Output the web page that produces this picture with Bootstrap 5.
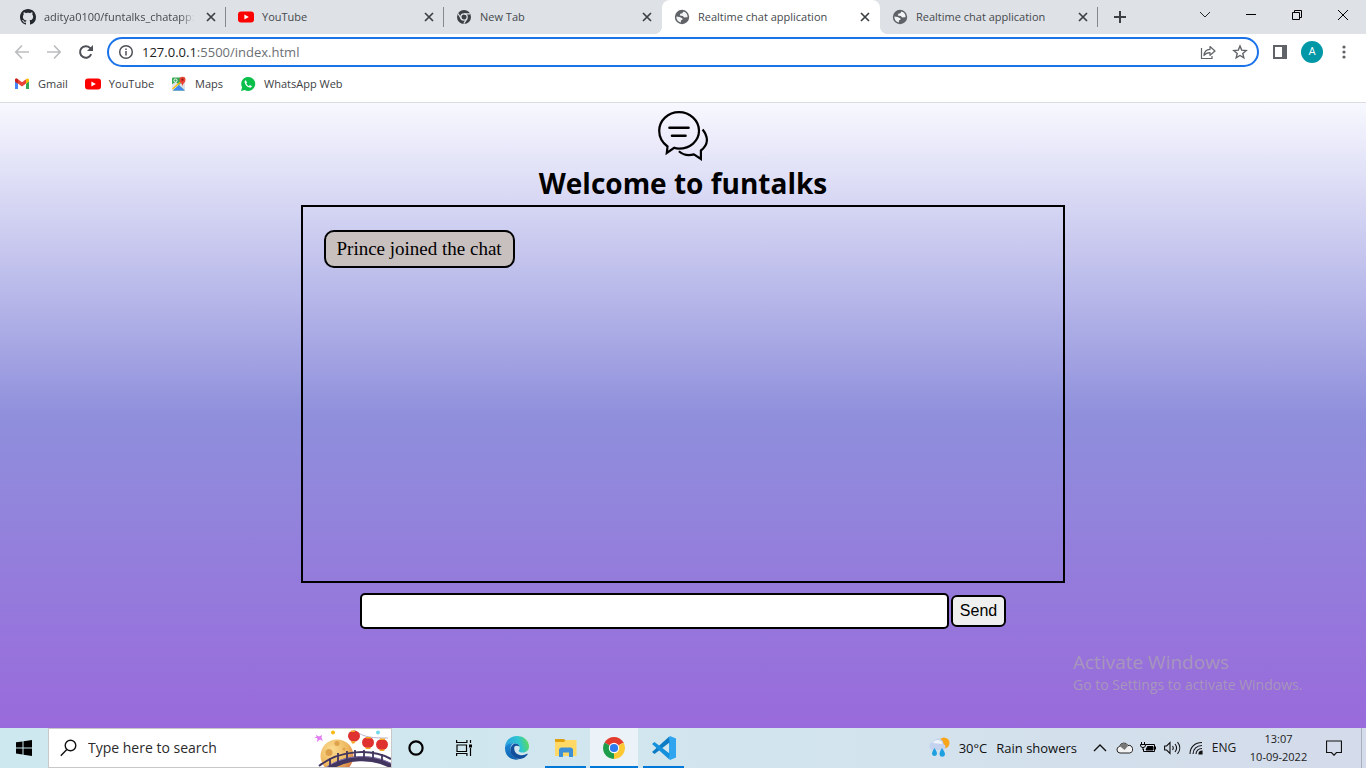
<!DOCTYPE html>
<html lang="en">
<head>
<meta charset="utf-8">
<meta name="viewport" content="width=device-width, initial-scale=1">
<title>Realtime chat application</title>
<link href="https://cdn.jsdelivr.net/npm/bootstrap@5.3.0/dist/css/bootstrap.min.css" rel="stylesheet">
<style>
  body { font-family: "Open Sans", "Noto Sans", sans-serif; font-size: 11px; line-height: 16px; color: #3c4043; }
  button { border: 0; background: none; padding: 0; color: inherit; }
  svg { display: block; flex: none; }

  /* browser tabs */
  .tab-strip { background: #dee1e6; height: 34px; padding-left: 8px; }
  .tab-item { width: 218px; padding: 0 7px 0 12px; position: relative; }
  .tab-item.ruled { background: linear-gradient(#868a8f, #868a8f) right center / 1px 20px no-repeat; }
  .tab-item.current { background: #fff; border-radius: 8px 8px 0 0; }
  .tab-item.current::before, .tab-item.current::after { content: ""; position: absolute; bottom: 0; width: 8px; height: 8px; }
  .tab-item.current::before { left: -8px; background: radial-gradient(circle at 0 0, transparent 8px, #fff 8px); }
  .tab-item.current::after { right: -8px; background: radial-gradient(circle at 100% 0, transparent 8px, #fff 8px); }
  .tab-label { color: #45494d; text-decoration: none; }
  .tab-label span { white-space: nowrap; }
  .tab-label .faded { -webkit-mask-image: linear-gradient(90deg, #000 90%, transparent); mask-image: linear-gradient(90deg, #000 90%, transparent); }
  .tab-close { width: 16px; height: 16px; }
  .new-tab { width: 44px; }
  .win-btn { width: 46px; height: 30px; color: #000; }

  /* toolbar */
  .toolbar { height: 36px; padding: 0 6px; gap: 5px; color: #5f6368; }
  .tool-btn { width: 32px; height: 28px; }
  .omnibox { border: 2px solid #1a73e8; border-radius: 15px; height: 30px; padding-left: 9px; padding-right: 1px; }
  .address { font-size: 13px; line-height: 20px; color: #6b6f74; }
  .address b { font-weight: 400; color: #202124; }
  .avatar { width: 22px; height: 22px; background: #0097a7; color: #fff; font: 11px/22px Roboto, sans-serif; text-align: center; }
  .bookmarks { height: 33px; padding: 0 14px 4px; gap: 17px; border-bottom: 1px solid #dadce0; }
  .bookmarks a { color: #3c4043; text-decoration: none; gap: 8px; }

  /* page */
  .chat-page { background: linear-gradient(#f8f8ff, #8f8fdc 50%, #996adb); padding-top: 8px; padding-bottom: 99px; position: relative; }
  .chat-page h1 { font-size: 28px; line-height: 44px; font-weight: 700; color: #000; margin: 0; }
  .chat-box { width: 56%; border: 2px solid #000; padding: 23px 21px; margin-bottom: 10px; }
  .bubble { background: #c8bfbf; color: #000; border: 2px solid #000; border-radius: 10px; padding: 5px 11px; font: 19px/24px "Liberation Serif", serif; }
  .send-form { width: 646px; max-width: 100%; gap: 2px; }
  .send-form input { border: 2px solid #000; border-radius: 5px; height: 36px; min-width: 0; padding: 0 8px; background: #fff; }
  .send-form button { width: 55px; height: 32px; border: 2px solid #000; border-radius: 6px; background: #efefef; color: #000; font: 16px/20px "Liberation Sans", sans-serif; }
  .watermark { position: absolute; right: 57px; bottom: 33px; width: 236px; color: #a796bc; font-size: 14px; line-height: 20px; white-space: nowrap; }
  .watermark p { font-size: 19px; line-height: 26px; margin: 0; }

  /* taskbar */
  .taskbar { height: 40px; background: linear-gradient(90deg, #cde8ee, #d2e5ee 55%, #d4dbea); color: #1b1b1b; }
  .task-btn { width: 48px; height: 40px; }
  .app-btn { width: 49px; height: 40px; padding: 0 4px; }
  .app-btn > span { height: 40px; border-bottom: 2px solid #0078d7; padding-top: 2px; }
  .app-btn.current { padding: 0 1px 0 0; }
  .app-btn.current > span { background: #ebf3f8; }
  .search-box { width: 344px; height: 40px; background: #fff; border: 1px solid #c8c8c8; padding-left: 11px; gap: 11px; }
  .search-box input { border: 0; outline: 0; background: transparent; min-width: 0; width: 100px; font-size: 14px; line-height: 20px; padding: 0; color: #2b2b2b; }
  .search-box input::placeholder { color: #2b2b2b; opacity: 1; }
  .weather { font-size: 13px; gap: 9px; color: #111; margin-right: 11px; }
  .tray-btn { width: 24px; height: 40px; }
  .lang { width: 37px; padding-right: 5px; font-size: 12px; }
  .clock { width: 67px; line-height: 18px; font-size: 11px; }
  .notice { width: 43px; margin-right: 6px; }
  .peek { width: 5px; border-left: 1px solid #a9b0bb; }
</style>
</head>
<body class="vh-100 d-flex flex-column overflow-hidden">

<svg width="0" height="0" class="position-absolute" aria-hidden="true">
  <symbol id="i-x" viewBox="0 0 16 16"><path d="M4 4l8 8M12 4l-8 8" stroke="#3c4043" stroke-width="1.7" fill="none"/></symbol>
  <symbol id="i-yt" viewBox="0 0 16 16"><rect y="2.500" width="16" height="11" rx="3" fill="#f00"/><path d="M6.400 5.500v5L10.800 8z" fill="#fff"/></symbol>
  <symbol id="i-globe" viewBox="0 0 16 16"><circle cx="8" cy="8" r="7.200" fill="#5f6368"/><path d="M9.500 2.500L8.300 4.200 6.300 4.800 5.800 6.600 8.800 6.900 10.200 8.500 12.200 8.200 13.600 8.300C13.800 5.200 12 3 9.500 2.500zM2.300 7.600L5.600 7.900 8.300 9.200 8.600 10.600 6.900 11.600 6.900 13.600C4 13 2.200 10.600 2.300 7.600z" fill="#f1f3f4"/></symbol>
</svg>

<header class="bg-white">
  <nav class="tab-strip d-flex" aria-label="Tabs">
    <div class="tab-item ruled d-flex align-items-center">
      <a href="#" class="tab-label d-flex align-items-center flex-grow-1 gap-2"><svg width="16" height="16" viewBox="0 0 16 16" fill="#24292f"><path d="M8 0C3.580 0 0 3.580 0 8c0 3.540 2.290 6.530 5.470 7.590.4.070.55-.17.55-.38 0-.19-.01-.82-.01-1.490-2.010.37-2.530-.49-2.690-.94-.09-.23-.48-.94-.82-1.130-.28-.15-.68-.52-.01-.53.63-.01 1.080.58 1.230.82.72 1.210 1.870.87 2.330.66.07-.52.28-.87.51-1.070-1.780-.2-3.640-.89-3.640-3.950 0-.87.31-1.590.82-2.150-.08-.2-.36-1.020.08-2.120 0 0 .67-.21 2.200.82.64-.18 1.320-.27 2-.27s1.360.09 2 .27c1.530-1.040 2.200-.82 2.200-.82.44 1.100.16 1.920.08 2.120.51.56.82 1.270.82 2.150 0 3.070-1.870 3.750-3.650 3.950.29.25.54.73.54 1.480 0 1.070-.01 1.930-.01 2.200 0 .21.15.46.55.38A8.010 8.010 0 0 0 16 8c0-4.420-3.580-8-8-8"/></svg><span class="faded">aditya0100/funtalks_chatapp:</span></a>
      <button class="tab-close" aria-label="Close tab"><svg width="16" height="16"><use href="#i-x"/></svg></button>
    </div>
    <div class="tab-item ruled d-flex align-items-center">
      <a href="#" class="tab-label d-flex align-items-center flex-grow-1 gap-2"><svg width="16" height="16"><use href="#i-yt"/></svg><span>YouTube</span></a>
      <button class="tab-close" aria-label="Close tab"><svg width="16" height="16"><use href="#i-x"/></svg></button>
    </div>
    <div class="tab-item d-flex align-items-center">
      <a href="#" class="tab-label d-flex align-items-center flex-grow-1 gap-2"><svg width="16" height="16" viewBox="0 0 16 16"><circle cx="8" cy="8" r="7" fill="#3c4043"/><circle cx="8" cy="8" r="3.200" fill="none" stroke="#dee1e6" stroke-width="1.300"/><path d="M8 4.800h6M10.800 9.600l-3 5M5.200 9.600L2 4.500" stroke="#dee1e6" stroke-width="1.200"/></svg><span>New Tab</span></a>
      <button class="tab-close" aria-label="Close tab"><svg width="16" height="16"><use href="#i-x"/></svg></button>
    </div>
    <div class="tab-item current d-flex align-items-center">
      <a href="#" class="tab-label d-flex align-items-center flex-grow-1 gap-2"><svg width="16" height="16"><use href="#i-globe"/></svg><span>Realtime chat application</span></a>
      <button class="tab-close" aria-label="Close tab"><svg width="16" height="16"><use href="#i-x"/></svg></button>
    </div>
    <div class="tab-item ruled d-flex align-items-center">
      <a href="#" class="tab-label d-flex align-items-center flex-grow-1 gap-2"><svg width="16" height="16"><use href="#i-globe"/></svg><span>Realtime chat application</span></a>
      <button class="tab-close" aria-label="Close tab"><svg width="16" height="16"><use href="#i-x"/></svg></button>
    </div>
    <button class="new-tab d-flex align-items-center justify-content-center" aria-label="New tab"><svg width="14" height="14" viewBox="0 0 14 14"><path d="M7 1v12M1 7h12" stroke="#3c4043" stroke-width="2"/></svg></button>
    <div class="d-flex ms-auto">
      <button class="win-btn d-flex align-items-center justify-content-center" aria-label="Search tabs"><svg width="12" height="12" viewBox="0 0 12 12" fill="none" stroke="#222"><path d="M1 3l5 5 5-5"/></svg></button>
      <button class="win-btn d-flex align-items-center justify-content-center" aria-label="Minimize"><svg width="10" height="10" viewBox="0 0 10 10"><path d="M0 4.500h10" stroke="#000"/></svg></button>
      <button class="win-btn d-flex align-items-center justify-content-center" aria-label="Restore"><svg width="10" height="10" viewBox="0 0 10 10" fill="none" stroke="#000"><path d="M.5 2.500h7v7h-7zM2.500 2.500v-2h7v7h-2"/></svg></button>
      <button class="win-btn d-flex align-items-center justify-content-center" aria-label="Close"><svg width="10" height="10" viewBox="0 0 10 10" stroke="#000"><path d="M0 0l10 10M10 0L0 10"/></svg></button>
    </div>
  </nav>

  <div class="toolbar d-flex align-items-center">
    <div class="d-flex">
      <button class="tool-btn d-flex align-items-center justify-content-center" aria-label="Back"><svg width="16" height="16" viewBox="0 0 16 16" fill="none" stroke="#bbbdc0" stroke-width="1.700"><path d="M15 8H2M8 1.500L1.800 8 8 14.500"/></svg></button>
      <button class="tool-btn d-flex align-items-center justify-content-center" aria-label="Forward"><svg width="16" height="16" viewBox="0 0 16 16" fill="none" stroke="#bbbdc0" stroke-width="1.700"><path d="M1 8h13M8 1.500L14.200 8 8 14.500"/></svg></button>
      <button class="tool-btn d-flex align-items-center justify-content-center" aria-label="Reload"><svg width="16" height="16" viewBox="0 0 16 16" fill="none" stroke="#4d5156" stroke-width="2"><path d="M13.200 10.200A5.800 5.800 0 1 1 12 3.900L13 5"/><path d="M15 1v6H9z" fill="#4d5156" stroke="none"/></svg></button>
    </div>
    <div class="omnibox d-flex align-items-center flex-grow-1">
      <svg width="16" height="16" viewBox="0 0 16 16" fill="none" stroke="#4d5156" stroke-width="1.500"><circle cx="8" cy="8" r="6.300"/><path d="M8 7v4.500M8 4.400v1.700"/></svg>
      <div class="address ms-2 flex-grow-1"><b>127.0.0.1</b>:5500/index.html</div>
      <button class="tool-btn d-flex align-items-center justify-content-center" aria-label="Share"><svg width="16" height="16" viewBox="0 0 16 16" fill="none" stroke="#5f6368" stroke-width="1.200"><path d="M1.500 4v10.500H12V12"/><path d="M4 11.500C4.300 7.500 6.500 5.500 10 5.400V2.500L15 7l-5 4.300V8.600C7 8.600 5.400 9.500 4 11.500z" stroke-linejoin="round"/></svg></button>
      <button class="tool-btn d-flex align-items-center justify-content-center" aria-label="Bookmark"><svg width="16" height="16" viewBox="0 0 16 16" fill="none" stroke="#5f6368" stroke-width="1.400"><path d="M8 2l1.700 4.100 4.500.4-3.400 2.900 1 4.400L8 11.500l-3.800 2.300 1-4.400L1.800 6.500l4.500-.4z"/></svg></button>
    </div>
    <div class="d-flex align-items-center">
      <button class="tool-btn d-flex align-items-center justify-content-center" aria-label="Side panel"><svg width="14" height="14" viewBox="0 0 14 14"><path d="M1 1h12v12H1z" fill="none" stroke="#5f6368" stroke-width="2"/><path d="M9 1h4v12H9z" fill="#5f6368"/></svg></button>
      <button class="tool-btn d-flex align-items-center justify-content-center" aria-label="Profile"><span class="avatar rounded-circle">A</span></button>
      <button class="tool-btn d-flex align-items-center justify-content-center" aria-label="Menu"><svg width="4" height="14" viewBox="0 0 4 14" fill="#5f6368"><circle cx="2" cy="2" r="1.600"/><circle cx="2" cy="7" r="1.600"/><circle cx="2" cy="12" r="1.600"/></svg></button>
    </div>
  </div>

  <nav class="bookmarks d-flex align-items-center" aria-label="Bookmarks">
    <a href="#" class="d-flex align-items-center"><svg width="16" height="16" viewBox="0 0 16 16"><path d="M1 4v9h3V7.500z" fill="#4285f4"/><path d="M15 4v9h-3V7.500z" fill="#34a853"/><path d="M1 3.500C1.500 2 3 2.400 4 3.300l4 3 4-3V7.600l-4 3-4-3L1 5.500z" fill="#ea4335"/><path d="M12 3.300c1-.9 2.600-1.300 3 .5v1.700l-3 2.200z" fill="#fbbc04"/><path d="M1 3.500v2l3 2.200V3.300c-1-1-2.600-1.300-3 .2z" fill="#c5221f"/></svg>Gmail</a>
    <a href="#" class="d-flex align-items-center"><svg width="16" height="16"><use href="#i-yt"/></svg>YouTube</a>
    <a href="#" class="d-flex align-items-center"><svg width="16" height="16" viewBox="0 0 16 16"><rect x="1" y="1.500" width="13" height="13" rx="1" fill="#34a853"/><path d="M1 14V8l4-2 3 3-6 5.500z" fill="#dfe3e8"/><path d="M2 14.500L8 9l6 5.500z" fill="#4285f4"/><path d="M8 9l5-5 1 1v9.500z" fill="#dfe3e8"/><path d="M1.500 13L14 2" stroke="#fbbc04" stroke-width="1.200"/><circle cx="4.500" cy="4.500" r="1.600" fill="none" stroke="#fff"/><path d="M11.500 10.500C11.300 7.500 8.500 6.800 8.500 3.800a3 3 0 0 1 6 0c0 3-2.800 3.700-3 6.700z" fill="#ea4335"/><circle cx="11.500" cy="3.700" r="1.100" fill="#8a1a12"/></svg>Maps</a>
    <a href="#" class="d-flex align-items-center"><svg width="16" height="16" viewBox="0 0 16 16"><path d="M1 15l1.100-3.700A7 7 0 1 1 4.800 14z" fill="#0ac04a"/><path d="M5.800 4.300c-.9.300-1.400 1.200-1.100 2.400.7 2.500 2.600 4.300 5 4.900 1.100.2 2-.4 2.100-1.500L9.900 9l-.9 1C7.700 9.500 6.900 8.600 6.300 7.400l.7-.9z" fill="#fff"/></svg>WhatsApp Web</a>
  </nav>
</header>

<main class="chat-page flex-grow-1 d-flex flex-column align-items-center">
  <svg width="50" height="50" viewBox="0 0 50 50" fill="none" stroke="#000" stroke-width="2.200"><path d="M9.500 35.500C4 31.500 1.200 26 1.200 19.800 1.200 9.500 10 1.200 21 1.200s20 8.300 20 18.600-9 17.800-20 17.800c-1.700 0-3.300-.2-4.800-.8L8.800 42z"/><path d="M44.600 18.500c3 3.800 4.400 7.500 4.300 11-.2 4-2.400 7.300-6 10V48l-7-4.600c-6 1.500-11.300.2-15-3.200"/><path d="M11.500 16.800h19M14 24.800h13.500" stroke-width="2.600" stroke-linecap="round"/></svg>
  <h1>Welcome to funtalks</h1>
  <section class="chat-box flex-grow-1 d-flex flex-column align-items-start" aria-label="Messages">
    <div class="bubble">Prince joined the chat</div>
  </section>
  <form class="send-form d-flex align-items-center" onsubmit="return false">
    <input type="text" class="flex-grow-1" aria-label="Message">
    <button type="submit">Send</button>
  </form>
  <aside class="watermark"><p>Activate Windows</p>Go to Settings to activate Windows.</aside>
</main>

<footer class="taskbar d-flex align-items-center">
  <button class="task-btn d-flex align-items-center justify-content-center" aria-label="Start"><svg width="16" height="16" viewBox="0 0 16 16" fill="#000"><path d="M0 2.300L6.500 1.400v6H0zM7.500 1.200L16 0v7.400H7.500zM0 8.400h6.500v6.100L0 13.600zM7.500 8.400H16V16l-8.500-1.200z"/></svg></button>
  <div class="search-box d-flex align-items-center">
    <svg width="17" height="18" viewBox="0 0 17 18" fill="none" stroke="#111" stroke-width="1.400"><circle cx="10.500" cy="6.500" r="5.300"/><path d="M6.800 10.400L.8 16.800"/></svg>
    <input type="text" class="flex-grow-1" placeholder="Type here to search" aria-label="Search">
    <svg class="align-self-end" width="78" height="38" viewBox="0 0 78 38"><defs><radialGradient id="moon" cx=".35" cy=".3" r=".8"><stop offset="0" stop-color="#fbdc92"/><stop offset=".6" stop-color="#eeb85f"/><stop offset="1" stop-color="#cf6b3e"/></radialGradient><clipPath id="artclip"><path d="M0 0h78v38H0z"/></clipPath></defs><g clip-path="url(#artclip)"><circle cx="24" cy="27" r="16.500" fill="url(#moon)"/><circle cx="16" cy="23.500" r="3.500" fill="#dea24c"/><circle cx="24" cy="14.500" r="2.500" fill="#dea24c"/><circle cx="31" cy="20" r="1.500" fill="#dea24c"/><path d="M41 1c10 8 20 8 34 8" stroke="#b9b5cf" fill="none"/><g fill="#e03131"><ellipse cx="41" cy="7" rx="6" ry="5.500"/><ellipse cx="55" cy="13.500" rx="6" ry="5.500"/><ellipse cx="69" cy="15.500" rx="6" ry="5.500"/></g><g fill="#f5a623"><path d="M38 1.500h4v1.500h-4zM38 12l5 .5-2 2h-2zM53 8h5v1.500h-5zM52 18.500h6l-1 1.500h-4zM67 9.500h5V11h-5zM66 20.500h6l-1 1.500h-4z"/></g><path d="M3 6l3 1.500L9 6 8.500 9l1.500 3-3-1.500L4 13l.5-3.500L1 8h2.500z" fill="#e07bf0"/><circle cx="20" cy="3.500" r="2" fill="#f8b912"/><circle cx="65" cy="3.500" r="2" fill="#72d8ea"/><g fill="none"><path d="M14 41C32 27 60 26 80 38" stroke="#42355f" stroke-width="5"/><path d="M13 38.500C32 25 60 24 80 35.500" stroke="#8473ad"/><path d="M6 37C26 21 58 19 78 30" stroke="#42355f" stroke-width="2"/><path d="M17 37v-8M25 33v-9M34 30v-8M42 28v-7M51 28v-7M60 29v-7M69 32v-7" stroke="#42355f" stroke-width="1.800"/></g></g></svg>
  </div>
  <button class="task-btn d-flex align-items-center justify-content-center" aria-label="Cortana"><svg width="16" height="16" viewBox="0 0 16 16"><circle cx="8" cy="8" r="6.600" fill="none" stroke="#000" stroke-width="2.200"/></svg></button>
  <button class="task-btn d-flex align-items-center justify-content-center" aria-label="Task view"><svg width="16" height="16" viewBox="0 0 16 16" fill="none" stroke="#000" stroke-width="1.200"><path d="M1 5h9.500v6.500H1zM.6 0v2.500h10.300V0M.6 16v-2.500h10.300V16M14.500 0v3M14.500 8v8"/><path d="M13 4.500h3v3h-3z" fill="#000" stroke="none"/></svg></button>
  <button class="app-btn d-flex align-items-center justify-content-center ms-1 me-n1" aria-label="Edge"><svg width="24" height="24" viewBox="0 0 24 24"><defs><linearGradient id="ea" x1="0" y1=".5" x2="1" y2=".3"><stop offset="0" stop-color="#2aa0e4"/><stop offset=".6" stop-color="#2fc6cf"/><stop offset="1" stop-color="#61dc51"/></linearGradient><linearGradient id="eb" x2="0" y2="1"><stop offset="0" stop-color="#1b8ad8"/><stop offset="1" stop-color="#0d5fae"/></linearGradient></defs><path d="M0 11C.5 4 6 0 12 0c7 0 12 5 12 10.500 0 3.500-2.500 6-6 6-2.500 0-4.300-.9-4.300-1.800 0-.7 1-1 1-3C14.700 9 12 7.500 9 7.500 4.500 7.500 1 9 0 11z" fill="url(#ea)"/><path d="M0 11c1.500-2.800 5-4 8.500-3.600C6 8.700 5 11.500 5.500 15c.7 4.300 4.500 7.600 9 8C8 25.500 0 21 0 12.500z" fill="url(#eb)"/><path d="M9.500 10.500c-1 3 .5 7.500 5.500 8.500 2.500.5 5 0 7-1.200.6-.3 1 .2.600.7-2 2.700-4.600 4.200-7.600 4.500C9.500 23 5.300 19 5.300 14.300c0-3 1.700-5.500 4.200-6.700 2.500 0 4.500 1 5 3-1.500-1-4-1.300-5-.1z" fill="#124f9c"/></svg></button>
  <button class="app-btn" aria-label="File Explorer"><span class="d-flex align-items-center justify-content-center"><svg width="22" height="20" viewBox="0 0 22 20"><path d="M0 1h9l2 2h10v7H0z" fill="#e0a010"/><path d="M0 4h9l2-2h10.500v16H0z" fill="#ffd866"/><path d="M4 19v-8l2-1.500h10l2 1.500v8h-4v-4.500H8V19z" fill="#3d8fd6"/></svg></span></button>
  <button class="app-btn current" aria-label="Chrome"><span class="d-flex align-items-center justify-content-center"><svg width="22" height="22" viewBox="0 0 22 22"><path d="M11 11L1.500 5.500A11 11 0 0 1 20.500 5.500z" fill="#e33b2e"/><path d="M11 11l9.500-5.500A11 11 0 0 1 11 22z" fill="#fcc934"/><path d="M11 11v11A11 11 0 0 1 1.500 5.500z" fill="#1e9e4a"/><path d="M11 6h9.700v-.5L11 5z" fill="#e33b2e"/><path d="M15.300 13.500L10.500 22h1z" fill="#fcc934"/><circle cx="11" cy="11" r="5.200" fill="#fff"/><circle cx="11" cy="11" r="4.100" fill="#2f7bf0"/></svg></span></button>
  <button class="app-btn" aria-label="Visual Studio Code"><span class="d-flex align-items-center justify-content-center"><svg width="24" height="24" viewBox="0 0 24 24"><path d="M18 0l6 2.500v19L18 24l-1-1V1z" fill="#2fa5f0"/><path d="M17.500 6.500L2.500 18 0 16 17 .8z" fill="#0d7cc4"/><path d="M17.500 17.500L2.500 6 0 8l17 15.200z" fill="#1590dc"/></svg></span></button>

  <div class="d-flex align-items-center ms-auto">
    <div class="weather d-flex align-items-center"><svg width="22" height="22" viewBox="0 0 22 22"><circle cx="16" cy="6" r="5.500" fill="#f8a51b"/><path d="M4 13a4.200 4.200 0 0 1 1-8 5.500 5.500 0 0 1 10.500 2 3.200 3.200 0 0 1 0 6z" fill="#c3d3ef"/><path d="M5 6a5 5 0 0 1 9.500 1z" fill="#eef3fc"/><path d="M6.500 11c2 3 2.500 4.500 2.500 6a2.600 2.600 0 0 1-5 0c0-1.500.5-3 2.500-6zM14 11c2 3 3 4.500 3 6.500a2.800 2.800 0 0 1-5.500 0c0-2 .5-3.500 2.500-6.500z" fill="#1ea0e0"/></svg><span>30°C</span><span>Rain showers</span></div>
    <button class="tray-btn d-flex align-items-center justify-content-center" aria-label="Show hidden icons"><svg width="14" height="8" viewBox="0 0 14 8"><path d="M1 7l6-6 6 6" fill="none" stroke="#111" stroke-width="1.400"/></svg></button>
    <button class="tray-btn d-flex align-items-center justify-content-center" aria-label="OneDrive"><svg width="17" height="12" viewBox="0 0 17 12"><path d="M4 11a3.300 3.300 0 0 1-.5-6.500A4.600 4.600 0 0 1 12 3.500 3.800 3.800 0 0 1 13.500 11z" fill="#f2f2f2" stroke="#222"/><path d="M4 4.500A4.200 4.200 0 0 1 12 4L8.500 8 5.500 5.500z" fill="#777"/></svg></button>
    <button class="tray-btn d-flex align-items-center justify-content-center" aria-label="Battery"><svg width="16" height="12" viewBox="0 0 16 12" fill="none" stroke="#000"><path d="M5.500 2.500h9v7H3.500V7"/><path d="M7.500 4.500H13v3.500H6z" fill="#000"/><path d="M15.500 4.500v3M1.500 0v2M4.500 0v2M.5 2.500h5C5.500 5 4.500 5.500 3 5.500S.5 5 .5 2.500zM3 5.500V8"/></svg></button>
    <button class="tray-btn d-flex align-items-center justify-content-center" aria-label="Volume"><svg width="17" height="14" viewBox="0 0 17 14" fill="none" stroke="#111" stroke-width="1.100"><path d="M.6 5h2L6 1.500v11L2.600 9h-2zM8.500 5c1 1.300 1 2.700 0 4M11 3c2 2.500 2 5.500 0 8M13.500 1.200c3 3.500 3 8.100 0 11.600"/></svg></button>
    <button class="tray-btn d-flex align-items-center justify-content-center" aria-label="Network"><svg width="14" height="14" viewBox="0 0 14 14" fill="none" stroke="#111" stroke-width="1.100"><path d="M1 13C1 6 6 1.500 13 1.500M4 13c0-5 4-8.500 9-8.500M7 13c0-3 2.500-5.500 6-5.500"/><path d="M10 13c0-1.800 1.200-3 3-3v3z" fill="#111"/></svg></button>
    <button class="lang" aria-label="Language">ENG</button>
    <div class="clock text-center">13:07<br>10-09-2022</div>
    <button class="notice tray-btn d-flex align-items-center justify-content-center" aria-label="Notifications"><svg width="16" height="16" viewBox="0 0 16 16"><path d="M.5 1h15v11.500h-5L8 15.200l-2.500-2.700h-5z" fill="none" stroke="#111" stroke-width="1.200"/></svg></button>
    <div class="peek align-self-stretch"></div>
  </div>
</footer>

<script src="https://cdn.jsdelivr.net/npm/bootstrap@5.3.0/dist/js/bootstrap.bundle.min.js"></script>
</body>
</html>
